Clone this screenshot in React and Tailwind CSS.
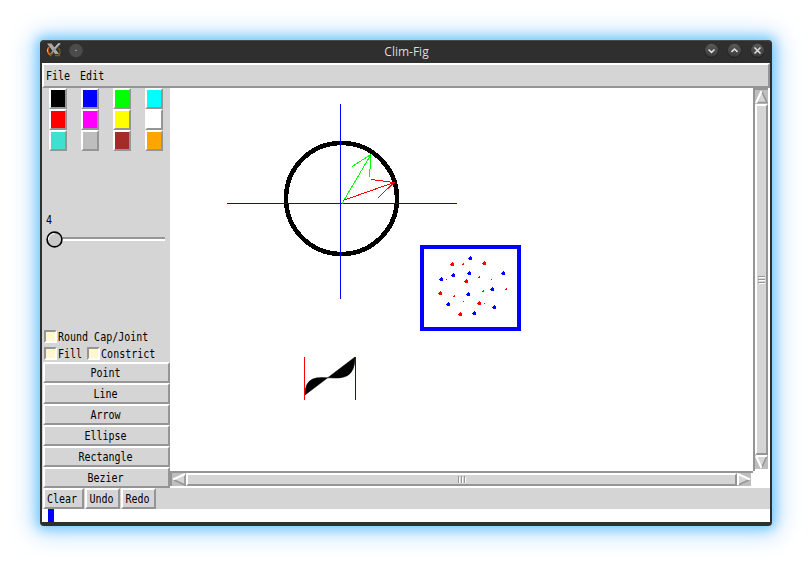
import React from "react";

const bevel = "border-2 border-t-white border-l-white border-r-[#959595] border-b-[#959595]";

function T({ children, className = "" }) {
  return (
    <span className={"inline-block scale-y-[1.2] whitespace-pre font-['DejaVu_Sans_Mono',monospace] text-[10px] leading-[13px] text-black " + className}>
      {children}
    </span>
  );
}

const swatches = [
  "bg-black", "bg-[#0000ff]", "bg-[#00ff00]", "bg-[#00ffff]",
  "bg-[#ff0000]", "bg-[#ff00ff]", "bg-[#ffff00]", "bg-white",
  "bg-[#40e0d0]", "bg-[#bebebe]", "bg-[#a52a2a]", "bg-[#ffa500]",
];
const tools = ["Point", "Line", "Arrow", "Ellipse", "Rectangle", "Bezier"];

const bigRed = [[452, 264], [484, 263], [466, 281], [440, 293], [479, 303], [460, 314]];
const bigBlue = [[470, 258], [453, 275], [469, 273], [503, 273], [441, 279], [492, 289], [468, 294], [448, 304], [494, 307], [474, 313]];
const smallRed = [[463, 263], [479, 276], [506, 288], [483, 290], [454, 295]];
const tinyRed = [[446, 279], [491, 279], [463, 301], [484, 303]];
const bigDot = ([x, y]) => `M${x} ${y - 2}h1v1h1v3h-3v-1h-1v-1h1v-1h1z`;
const smallDot = ([x, y]) => `M${x} ${y}h1v2h-2v-1h1z`;
const tinyDot = ([x, y]) => `M${x} ${y}h1v1h-1z`;

function Drawing() {
  return (
    <svg width="583" height="383" viewBox="170 88 583 383" shapeRendering="crispEdges" fill="none" className="block">
      <circle cx="341.5" cy="198.5" r="55.5" stroke="#000" strokeWidth="4.6" />
      <path d="M340 104h1v195h-1zM227 203h230v1h-230z" fill="#00f" />
      <path d="M342 203.5L371 154.5M352 166.5L371 154.5L369.5 177" stroke="#0f0" />
      <path d="M343 200.5L394 182.5M371.5 179.5L394 182.5L377.5 198.5" stroke="#f00" />
      <rect x="422" y="247" width="97" height="82" stroke="#00f" strokeWidth="4" />
      <path d={bigRed.map(bigDot).join("")} fill="#f00" />
      <path d={bigBlue.map(bigDot).join("")} fill="#00f" />
      <path d={smallRed.map(smallDot).join("") + tinyRed.map(tinyDot).join("")} fill="#f00" />
      <path d="M305 395C305 357 355 400 355 357Z" fill="#000" stroke="#000" strokeWidth=".5" shapeRendering="auto" />
      <path d="M304 357h1v43h-1z" fill="#f00" />
      <path d="M355 357h1v43h-1z" fill="#00f" />
    </svg>
  );
}

const arrows = {
  up: ["M1 13L6.5 1", "M6.5 1L12 12.5H1"],
  down: ["M1 1H12M1 1L6.5 13", "M12 1L6.5 13"],
  left: ["M1 6.5L13 1", "M13 1V12L1 6.5"],
  right: ["M1 12V1L13 6.5", "M13 6.5L1 12"],
};
const heads = { up: "M1 12.5L6.5 1L12 12.5z", down: "M1 1H12L6.5 13z", left: "M1 6.5L13 1V12z", right: "M1 1V12L13 6.5z" };

function Arrow({ dir }) {
  const tall = dir === "up" || dir === "down";
  return (
    <svg width={tall ? 13 : 14} height={tall ? 14 : 13} className="block shrink-0 bg-[#bebebe]">
      <path d={heads[dir]} fill="#d5d5d5" />
      <path d={arrows[dir][1]} fill="none" stroke="#959595" strokeWidth="1.6" />
      <path d={arrows[dir][0]} fill="none" stroke="#fff" strokeWidth="2" />
    </svg>
  );
}

function TitleButton({ d }) {
  return (
    <svg width="15" height="15" viewBox="0 0 15 15" fill="none">
      <defs>
        <linearGradient id="knob" x1="0" y1="0" x2="0" y2="1">
          <stop offset="0" stopColor="#5a5a5a" />
          <stop offset="1" stopColor="#3b3b3b" />
        </linearGradient>
      </defs>
      <circle cx="7.5" cy="8" r="7" fill="#222" />
      <circle cx="7.5" cy="7.3" r="6.5" fill="url(#knob)" />
      <path d={d} stroke="#dedede" strokeWidth="1.6" />
    </svg>
  );
}

function Check() {
  return <span className="block h-[13px] w-[13px] shrink-0 border-2 border-t-[#959595] border-l-[#959595] border-r-white border-b-white bg-[#fff8cf]" />;
}

export default function App() {
  return (
    <div className="h-[566px] w-[812px] overflow-hidden bg-white pt-[40px] pl-[40px]">
      <div className="flex h-[486px] w-[732px] flex-col rounded-[4px] bg-[#2f2f2f] px-[2px] pb-[4px] shadow-[0_0_12px_3px_#70c9fb,0_1px_26px_8px_#c5e2fd]">
        <div className="flex h-[23px] shrink-0 items-center rounded-t-[4px] shadow-[inset_0_1px_0_#4b4b46]">
          <div className="flex w-[120px] items-center gap-[6px] pl-[4px] pb-[3px]">
            <svg width="16" height="16" viewBox="0 0 16 16" fill="none">
              <path d="M3 5C.8 7.500 1.200 11 4.500 13" stroke="#d96a13" strokeWidth="1.8" />
              <path d="M1.500 7v3" stroke="#f7b13c" />
              <path d="M4 14l3-3M9 13.500h5M12.500 6c2 2 2 5 .3 7" stroke="#756019" strokeWidth="1.3" />
              <path d="M1 1.500h4.500l7.500 10.500h-4z" fill="#a9a9a9" />
              <path d="M12 1.500h3L6.500 11 3.500 12.500z" fill="#999" />
              <path d="M8.500 6l5-5" stroke="#ddd" />
            </svg>
            <svg width="15" height="15" viewBox="0 0 15 15">
              <circle cx="8" cy="7.5" r="6.8" fill="#4b4b4b" />
              <circle cx="8" cy="7.5" r=".7" fill="#bbb" />
            </svg>
          </div>
          <div className="flex-1 pt-px pl-[6px] text-center font-['Open_Sans','Noto_Sans',sans-serif] text-[12px] leading-[20px] text-[#dcdcdc]">Clim-Fig</div>
          <div className="flex w-[125px] justify-end gap-[8px] pr-[5px] pb-[2px]">
            <TitleButton d="M4.5 6.5L7.5 9.3L10.5 6.5" />
            <TitleButton d="M4.5 8.8L7.5 6L10.5 8.8" />
            <TitleButton d="M4.5 4.5l6 6M10.5 4.5l-6 6" />
          </div>
        </div>

        <div className={"flex h-[25px] shrink-0 items-center gap-[10px] bg-[#d5d5d5] pl-[2px] " + bevel}>
          <T>File</T>
          <T>Edit</T>
        </div>

        <div className="flex h-[400px] shrink-0 bg-white">
          <div className="flex w-[128px] shrink-0 flex-col bg-[#d5d5d5]">
            <div className="grid grid-cols-4 gap-x-[14px] pl-[7px] pr-[7px]">
              {swatches.map((c) => (
                <div key={c} className={"h-[21px] w-[18px] " + bevel + " " + c} />
              ))}
            </div>
            <div className="mt-[62px] flex h-[17px] items-start pl-[4px]"><T>4</T></div>
            <div className="flex h-[20px] items-center pl-[4px]">
              <svg width="120" height="18" viewBox="46 231 120 18">
                <path d="M54 237h111v2H54z" fill="#959595" />
                <path d="M54 239h111v2H54z" fill="#fff" />
                <path d="M54 237h110v2H54z" fill="#959595" />
                <circle cx="54.5" cy="239.5" r="7.4" fill="#c9c9c9" stroke="#000" strokeWidth="1.6" />
                <path d="M48.5 240a6 6 0 0 1 6-6.5" fill="none" stroke="#fff" />
              </svg>
            </div>
            <div className="mt-[79px] flex h-[15px] items-center gap-px pl-[2px]">
              <Check /><T>Round Cap/Joint</T>
            </div>
            <div className="mt-[2px] flex h-[15px] items-center gap-px pl-[2px]">
              <Check /><T>Fill</T><span className="ml-[4px]"><Check /></span><T>Constrict</T>
            </div>
            <div className="mt-auto flex flex-col pl-px">
              {tools.map((t) => (
                <div key={t} className={"flex h-[21px] items-center justify-center bg-[#d5d5d5] pr-[2px] " + bevel}>
                  <T>{t}</T>
                </div>
              ))}
            </div>
          </div>

          <div className="flex w-[583px] shrink-0 flex-col">
            <Drawing />
            <div className="flex h-[15px] w-[583px] border-t-2 border-l-2 border-[#959595]">
              <Arrow dir="left" />
              <div className={"flex h-[13px] w-[551px] items-center justify-center bg-[#d5d5d5] " + bevel}>
                <div className="flex h-[7px] gap-px">
                  {[0, 1, 2].map((i) => <span key={i} className="block w-[2px] border-t border-l border-[#959595] border-r border-r-white" />)}
                </div>
              </div>
              <Arrow dir="right" />
            </div>
          </div>

          <div className="flex h-[383px] w-[15px] shrink-0 flex-col border-t-2 border-l-2 border-[#959595]">
            <Arrow dir="up" />
            <div className={"flex h-[351px] w-[13px] items-center justify-center bg-[#d5d5d5] " + bevel}>
              <div className="flex w-[7px] flex-col gap-px">
                {[0, 1, 2].map((i) => <span key={i} className="block h-[2px] border-t border-l border-[#959595] border-b border-b-white" />)}
              </div>
            </div>
            <Arrow dir="down" />
          </div>
        </div>

        <div className="flex h-[21px] shrink-0 gap-px bg-[#d5d5d5] pl-px">
          <div className={"flex w-[41px] items-center justify-center pr-[3px] " + bevel}><T>Clear</T></div>
          <div className={"flex w-[35px] items-center justify-center pr-[2px] " + bevel}><T>Undo</T></div>
          <div className={"flex w-[35px] items-center justify-center pr-[2px] " + bevel}><T>Redo</T></div>
        </div>
        <div className="h-[13px] shrink-0 bg-white pl-[6px]">
          <div className="h-[13px] w-[6px] bg-[#0000ff]" />
        </div>
      </div>
    </div>
  );
}
